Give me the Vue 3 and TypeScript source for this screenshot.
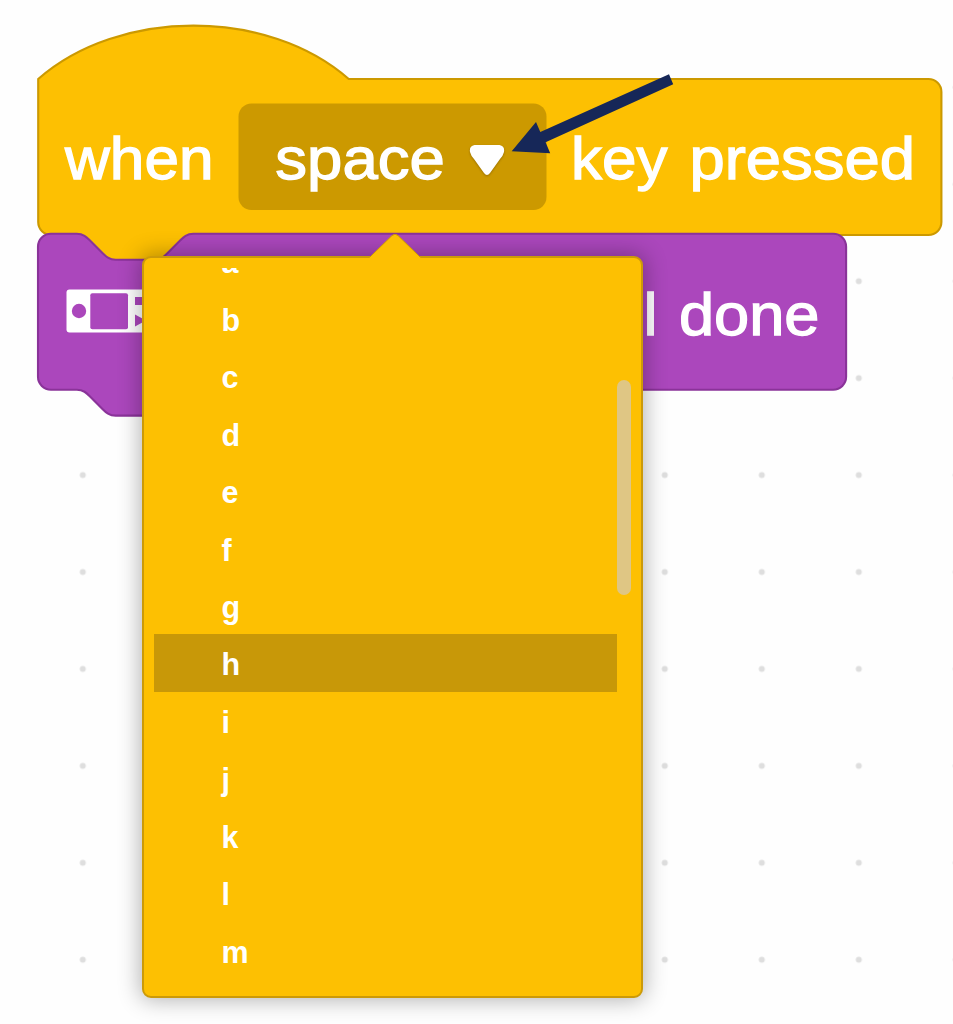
<script setup lang="ts">
interface Label {
  text: string
  x: number
  y: number
  width: number
}

const labels: Label[] = [
  { text: 'when', x: 65, y: 179.3, width: 148.5 },
  { text: 'space', x: 275.3, y: 179.3, width: 169.5 },
  { text: 'key', x: 571, y: 179.3, width: 96.5 },
  { text: 'pressed', x: 689.5, y: 179.3, width: 225.5 },
]
const motionLabels: Label[] = [
  { text: 'l', x: 643.6, y: 334.8, width: 14 },
  { text: 'done', x: 679, y: 334.8, width: 140.5 },
]

const keys: string[] = 'abcdefghijklm'.split('')
const selected = 'h'

const notch = 'c2,0 3,1 4,2 l4,4 c1,1 2,2 4,2 h12 c2,0 3,-1 4,-2 l4,-4 c1,-1 2,-2 4,-2'
const notchBack = 'c-2,0 -3,1 -4,2 l-4,4 c-1,1 -2,2 -4,2 h-12 c-2,0 -3,-1 -4,-2 l-4,-4 c-1,-1 -2,-2 -4,-2'
const hatPath = `M0,0 c25,-22 71,-22 96,0 H275.2 a4,4 0 0 1 4,4 V44.2 a4,4 0 0 1 -4,4 H48 ${notchBack} H4 a4,4 0 0 1 -4,-4 z`
const stackPath = `M0,4 A4,4 0 0 1 4,0 H12 ${notch} H245.8 a4,4 0 0 1 4,4 V44.2 a4,4 0 0 1 -4,4 H48 ${notchBack} H4 a4,4 0 0 1 -4,-4 z`
</script>

<template>
  <main class="workspace">
    <svg class="canvas" width="953" height="1024" viewBox="0 0 953 1024">
      <defs>
        <pattern id="grid" x="34.3" y="38.9" width="97" height="96.93" patternUnits="userSpaceOnUse">
          <circle cx="48.5" cy="48.5" r="3" fill="#dedede" />
        </pattern>
      </defs>
      <rect width="953" height="1024" fill="url(#grid)" />

      <path class="hat" :d="hatPath" transform="translate(38.2 79) scale(3.235)" />
      <rect x="238.5" y="103.5" width="308" height="106.5" rx="13" fill="#cc9900" />
      <path class="stack" :d="stackPath" transform="translate(38 233.8) scale(3.235)" />

      <text
        v-for="l in [...labels, ...motionLabels]"
        :key="l.text"
        class="label"
        :x="l.x"
        :y="l.y"
        :textLength="l.width"
        lengthAdjust="spacingAndGlyphs"
      >{{ l.text }}</text>

      <path
        class="caret"
        d="M474.5,145 H499.5 Q505,146 504,152 Q503,156 500,159 L490,173 Q487,177 484,173 L474,159 Q471,156 470,152 Q469,146 474.5,145 z"
      />

      <rect x="66.5" y="289.5" width="90" height="43" rx="3" fill="#fff" />
      <circle cx="79" cy="311" r="7.2" fill="#ab47bc" />
      <rect x="90.3" y="293.3" width="37.7" height="36" rx="2" fill="#ab47bc" />
      <rect x="135" y="297" width="9" height="8" fill="#ab47bc" />
      <path d="M135,314.5 L146,320.5 L135,326.5 z" fill="#ab47bc" />
    </svg>

    <section class="dropdown">
      <svg class="pointer" width="56" height="28" viewBox="0 0 56 28">
        <path d="M1,25 L24,2.5 Q27,0 30,2.5 L53,25 V28 H1 z" fill="#fdc002" />
        <path d="M1.5,24.5 L24,2.5 Q27,0 30,2.5 L52.5,24.5" fill="none" stroke="#cc9900" stroke-width="1" />
      </svg>
      <ul class="options">
        <li v-for="k in keys" :key="k" :class="['option', { selected: k === selected }]">{{ k }}</li>
      </ul>
      <div class="rail"><div class="thumb"></div></div>
    </section>

    <svg class="callout" width="164" height="82" viewBox="511 73 164 82">
      <path
        d="M511.7,151.2 L536,122 L540.3,132 L669,74.3 L673.2,84.3 L545.6,142.3 L550.2,153.2 z"
        fill="#162758"
      />
    </svg>
  </main>
</template>

<style scoped>
.workspace {
  position: relative;
  width: 953px;
  height: 1024px;
  overflow: hidden;
  background: #fefefe;
  font-family: "Liberation Sans", Arial, sans-serif;
}
.canvas {
  display: block;
}
.hat {
  fill: #fdc002;
  stroke: #cc9900;
  stroke-width: 0.65;
}
.stack {
  fill: #ab47bc;
  stroke: #8a3399;
  stroke-width: 0.65;
}
.label {
  font-size: 59.5px;
  fill: #fff;
  stroke: #fff;
  stroke-width: 1.3px;
}
.caret {
  fill: #fff;
  filter: drop-shadow(0 1px 1px rgba(90, 60, 0, 0.45));
}
.dropdown {
  position: absolute;
  left: 142px;
  top: 256px;
  box-sizing: border-box;
  width: 501px;
  height: 742px;
  padding: 10px;
  display: flex;
  border: 2px solid #cc9a08;
  border-radius: 9px;
  background: #fdc002;
  box-shadow: 0 0 22px 2px rgba(0, 0, 0, 0.3);
}
.pointer {
  position: absolute;
  left: 224px;
  top: -25px;
}
.options {
  width: 462.5px;
  height: 718px;
  margin: 0;
  padding: 0;
  list-style: none;
  overflow: hidden;
}
.option {
  box-sizing: border-box;
  height: 57.45px;
  padding-left: 67.5px;
  color: #fff;
  font-size: 30.5px;
  font-weight: 700;
  line-height: 60px;
}
.option:first-child {
  margin-top: -35.6px;
}
.selected {
  background: #c89808;
}
.rail {
  width: 14.5px;
  padding-top: 112px;
}
.thumb {
  height: 215px;
  border-radius: 7.5px;
  background: #dfc684;
}
.callout {
  position: absolute;
  left: 511px;
  top: 73px;
}
</style>
